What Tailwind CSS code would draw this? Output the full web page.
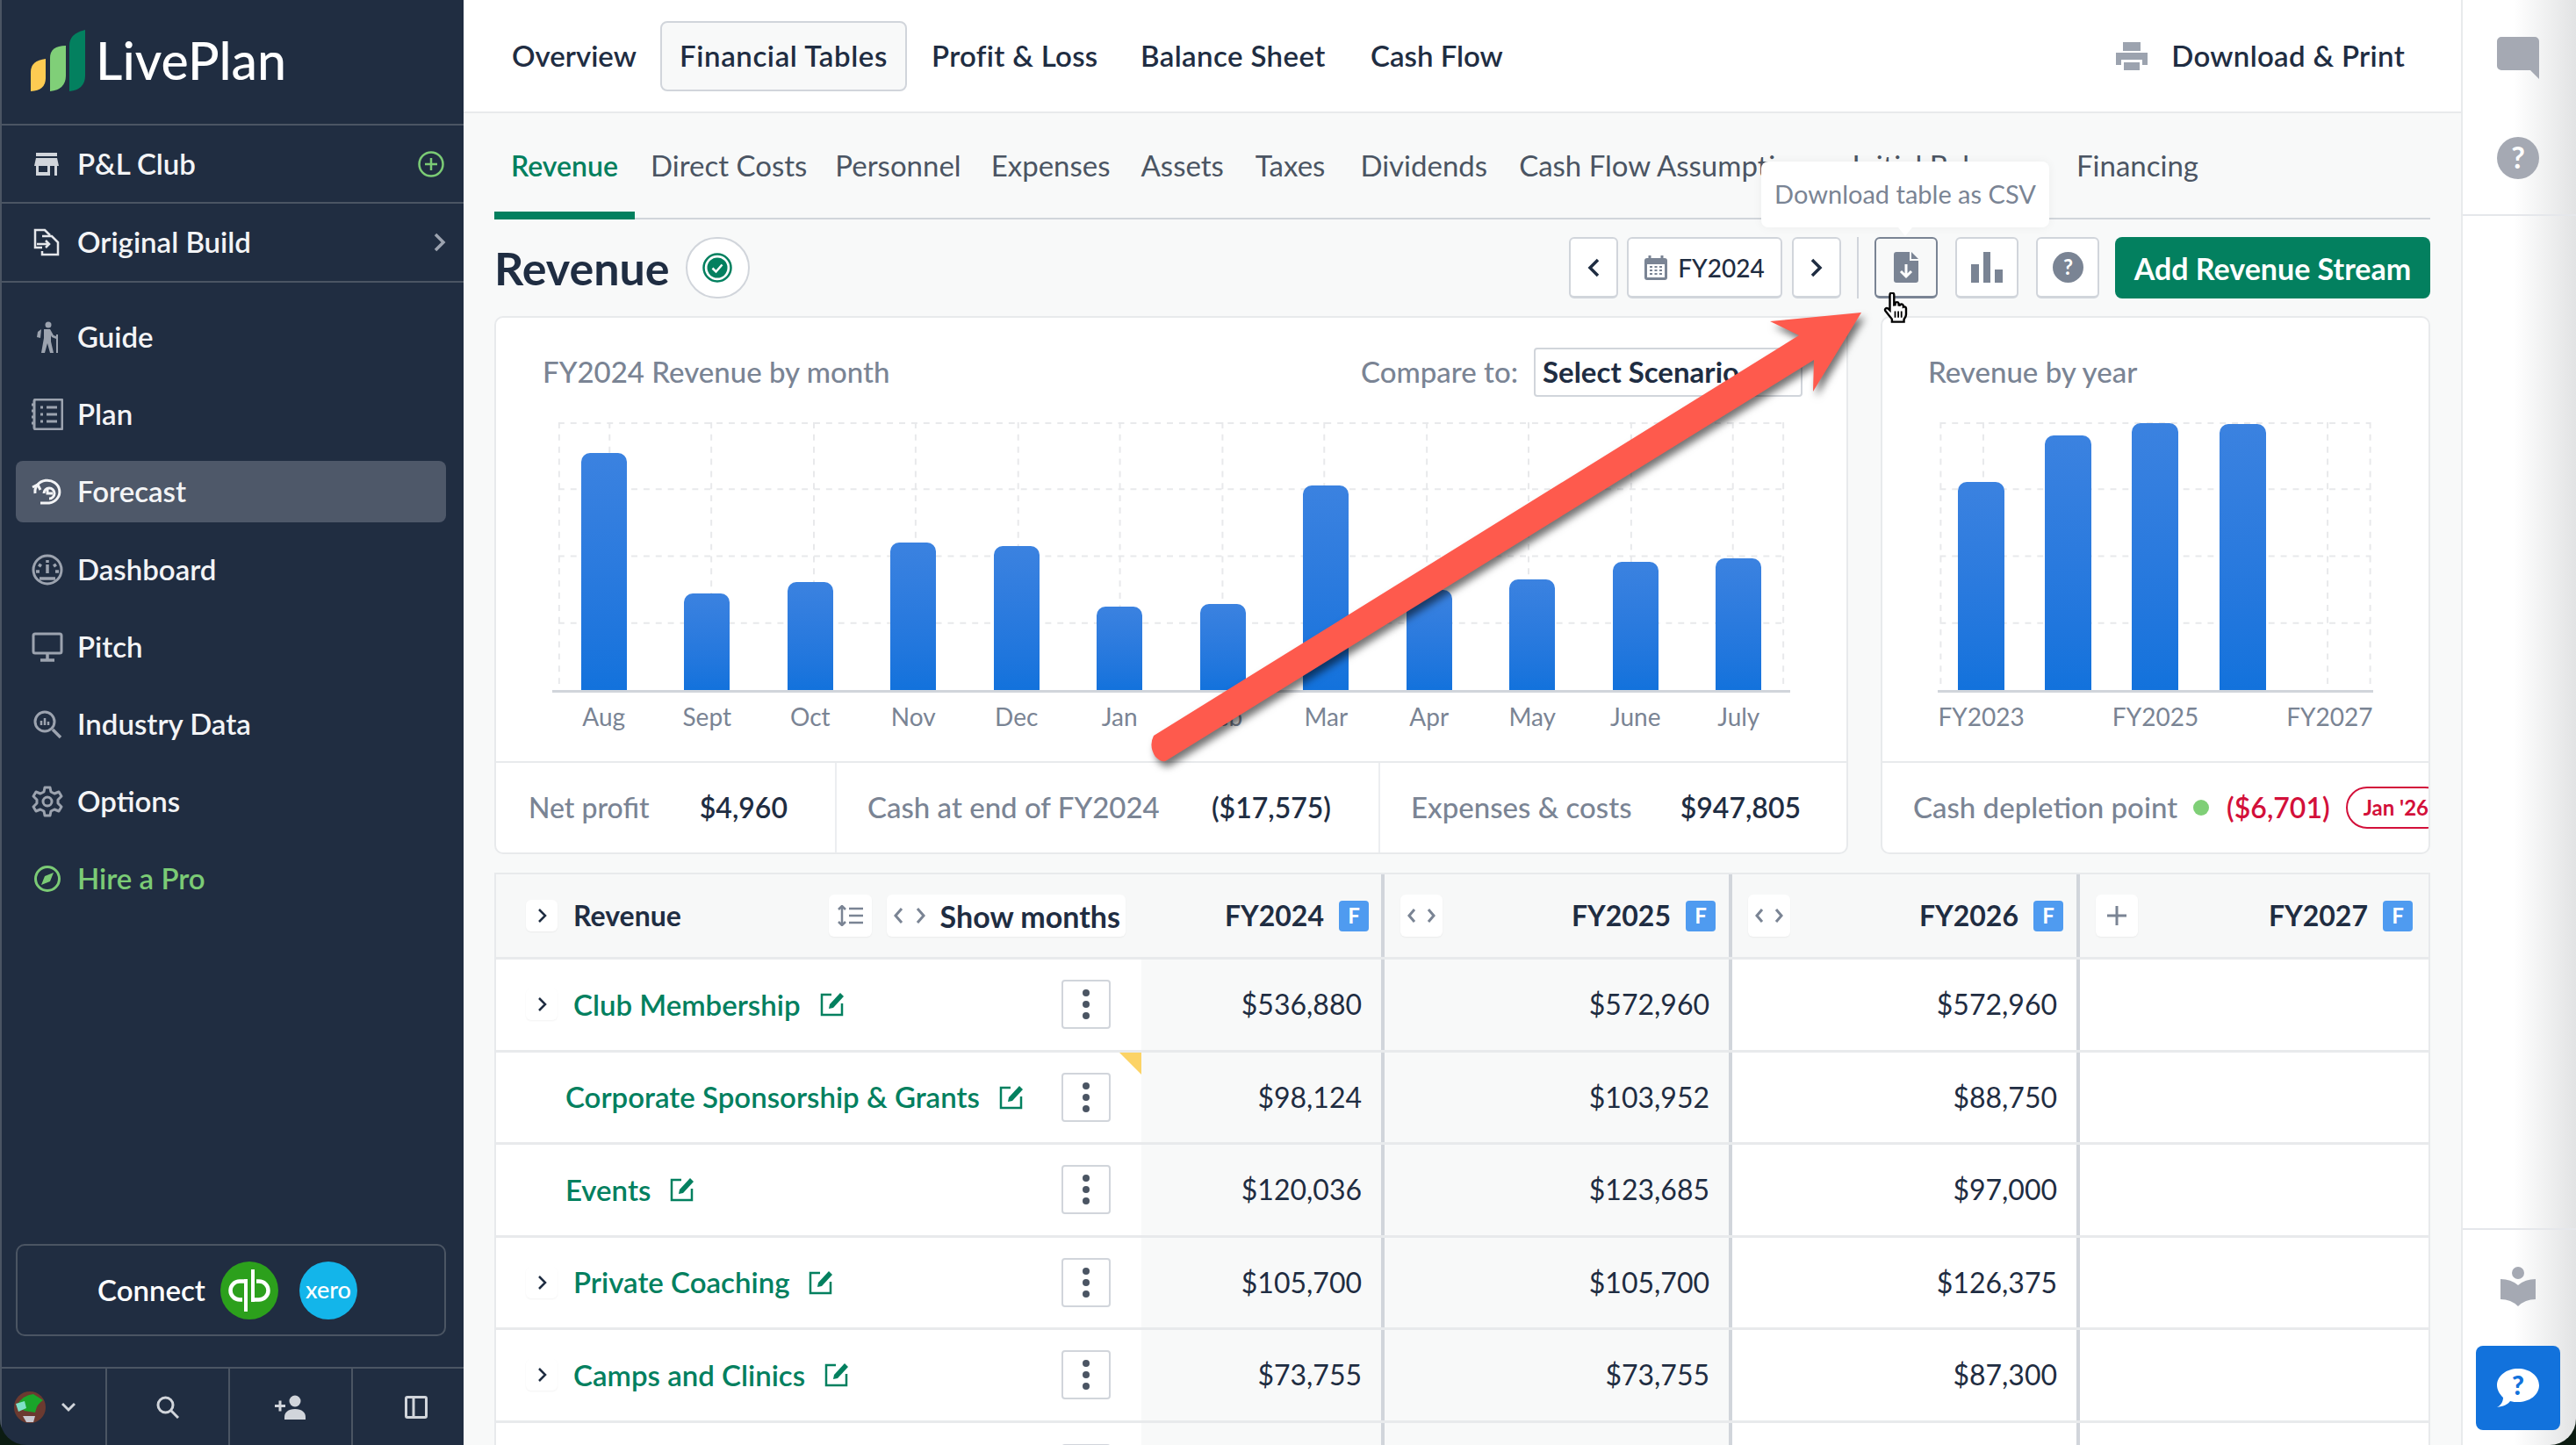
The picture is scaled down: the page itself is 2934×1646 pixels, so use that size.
<!DOCTYPE html>
<html lang="en">
<head>
<meta charset="UTF-8">
<title>LivePlan - Forecast</title>
<script src="https://cdn.jsdelivr.net/npm/@tailwindcss/browser@4"></script>
</head>
<body class="bg-[#0c1c12]">
<div class="relative flex h-[1646px] w-[2934px] overflow-hidden rounded-b-[30px] font-['Lato',sans-serif] text-[32px] text-[#1f2d42]">

  <!-- Sidebar -->
  <aside class="flex w-[528px] shrink-0 flex-col border-l-2 border-[#4b5563] bg-[#202d41] text-[33px] text-[#f3f4f6]">
    <div class="flex h-[143px] items-center gap-[12px] border-b-2 border-[#4b5563] pb-[4px] pl-[33px]">
      <svg class="h-[70px] w-[62px]" viewBox="0 0 62 70"><path d="M0 70V48Q0 35 17 33V55Q17 69 0 70Z" fill="#fdcb52"/><path d="M22 70V32Q22 18 40 18V52Q40 68 22 70Z" fill="#80cf78"/><path d="M44 70V18Q44 4 62 0V52Q62 68 44 70Z" fill="#03805f"/></svg>
      <span class="text-[59px] leading-none font-medium text-white">LivePlan</span>
    </div>
    <div class="flex h-[89px] items-center border-b-2 border-[#4b5563] pr-[22px] pl-[37px]">
      <svg class="mr-[21px] h-[26px] w-[28px]" viewBox="0 0 28 26" fill="#d1d5db"><rect x="2" y="0" width="24" height="4"/><path d="M2 6H26L28 15H0Z"/><path d="M2 15h3v11H2zM23 15h3v11h-3zM5 22h13v4H5zM15 15h3v8h-3z"/></svg>
      <span class="font-semibold">P&amp;L Club</span>
      <svg class="ml-auto h-[30px] w-[30px]" viewBox="0 0 30 30" fill="none" stroke="#7bcb75" stroke-width="2.5"><circle cx="15" cy="15" r="13.5"/><path d="M15 8v14M8 15h14"/></svg>
    </div>
    <div class="flex h-[90px] items-center border-b-2 border-[#4b5563] pr-[20px] pl-[36px]">
      <svg class="mr-[20px] h-[32px] w-[30px]" viewBox="0 0 30 32" fill="none" stroke="#e5e7eb" stroke-width="2.5"><path d="M10 22H2V2h11l6 6"/><path d="M10 9h11l7 7v14H10v-4"/><path d="M4 18h14m-4-4 4 4-4 4"/></svg>
      <span class="font-semibold">Original Build</span>
      <svg class="ml-auto h-[22px] w-[14px]" viewBox="0 0 14 22" fill="none" stroke="#9ca3af" stroke-width="3.5"><path d="M2 2l9 9-9 9"/></svg>
    </div>

    <nav class="flex flex-col pt-[18px] font-semibold">
      <a class="mr-[20px] ml-[16px] flex h-[88px] items-center gap-[16px] px-[18px]">
        <svg class="h-[36px] w-[36px]" viewBox="0 0 36 36" fill="#9ca3af"><circle cx="19" cy="4" r="3.5"/><path d="M12 9h9l4 7 3 1v-2h2v21h-2V20l-5-2-1-2v7l3 13h-4l-3-11-3 11h-4l3-17V9z"/><path d="M7 12l4-3-1 10-4-1z"/></svg>
        <span>Guide</span>
      </a>
      <a class="mr-[20px] ml-[16px] flex h-[88px] items-center gap-[16px] px-[18px]">
        <svg class="h-[36px] w-[36px]" viewBox="0 0 36 36" fill="none"><rect x="3" y="1" width="32" height="34" rx="2" stroke="#9ca3af" stroke-width="3"/><path d="M0 7h4M0 14h4M0 21h4M0 28h4" stroke="#9ca3af" stroke-width="3"/><path d="M10 10h3M17 10h12M10 18h3M17 18h12M10 26h3M17 26h12" stroke="#9ca3af" stroke-width="3"/></svg>
        <span>Plan</span>
      </a>
      <a class="mt-[9px] mr-[20px] mb-[10px] ml-[16px] flex h-[70px] items-center gap-[16px] rounded-[8px] bg-[#4e5869] px-[18px]">
        <svg class="h-[36px] w-[36px]" viewBox="0 0 36 36" fill="none" stroke="#f3f4f6" stroke-width="3"><path d="M4 20A14 13 0 1 1 20 31H10"/><path d="M1 13l6-3 3 6"/><path d="M14 20a6 6 0 1 1 6 6"/><path d="M18 14v6h6"/></svg>
        <span>Forecast</span>
      </a>
      <a class="mr-[20px] ml-[16px] flex h-[88px] items-center gap-[16px] px-[18px]">
        <svg class="h-[36px] w-[36px]" viewBox="0 0 36 36" fill="none" stroke="#9ca3af" stroke-width="3"><circle cx="18" cy="18" r="16"/><path d="M18 7v3M8 12l3 2M28 12l-3 2M5 20h4M27 20h4M18 12v10M9 28h18" stroke-width="3.5"/></svg>
        <span>Dashboard</span>
      </a>
      <a class="mr-[20px] ml-[16px] flex h-[88px] items-center gap-[16px] px-[18px]">
        <svg class="h-[36px] w-[36px]" viewBox="0 0 36 36" fill="none" stroke="#9ca3af" stroke-width="3"><rect x="2" y="3" width="32" height="22" rx="2"/><path d="M18 25v7M10 33h16" stroke-width="3.5"/></svg>
        <span>Pitch</span>
      </a>
      <a class="mr-[20px] ml-[16px] flex h-[88px] items-center gap-[16px] px-[18px]">
        <svg class="h-[36px] w-[36px]" viewBox="0 0 36 36" fill="none" stroke="#9ca3af" stroke-width="3"><circle cx="15" cy="15" r="11"/><path d="M24 24l9 9" stroke-width="3.5"/><path d="M11 14v5M15 11v8M19 15v4" stroke-width="2.5"/></svg>
        <span>Industry Data</span>
      </a>
      <a class="mr-[20px] ml-[16px] flex h-[88px] items-center gap-[16px] px-[18px]">
        <svg class="h-[36px] w-[36px]" viewBox="0 0 36 36" fill="none" stroke="#9ca3af" stroke-width="3"><circle cx="18" cy="18" r="5"/><path d="M15 2h6l1 5 4 2 5-2 3 5-4 4v4l4 4-3 5-5-2-4 2-1 5h-6l-1-5-4-2-5 2-3-5 4-4v-4l-4-4 3-5 5 2 4-2z" stroke-linejoin="round"/></svg>
        <span>Options</span>
      </a>
      <a class="mr-[20px] ml-[16px] flex h-[88px] items-center gap-[16px] px-[18px] text-[#7bcb75]">
        <svg class="h-[36px] w-[36px]" viewBox="0 0 36 36"><circle cx="18" cy="18" r="13.5" fill="none" stroke="#7bcb75" stroke-width="3"/><path d="M25 11l-4 10-10 4 4-10z" fill="#7bcb75"/></svg>
        <span>Hire a Pro</span>
      </a>
    </nav>

    <div class="mt-auto mr-[20px] ml-[16px] flex h-[105px] items-center justify-center gap-[17px] rounded-[10px] border-2 border-[#4b5563] pr-[8px] font-semibold">
      <span class="text-white">Connect</span>
      <svg class="h-[66px] w-[66px]" viewBox="0 0 66 66"><circle cx="33" cy="33" r="33" fill="#2ca01c"/><path d="M29 22.500H22a10.500 10.500 0 0 0 0 21H25" fill="none" stroke="white" stroke-width="4.500"/><path d="M29 20V57" stroke="white" stroke-width="4"/><path d="M37 43.500H44a10.500 10.500 0 0 0 0-21H41" fill="none" stroke="white" stroke-width="4.500"/><path d="M37 9V46" stroke="white" stroke-width="4"/></svg>
      <span class="ml-[7px] flex h-[66px] w-[66px] items-center justify-center rounded-full bg-[#13b5ea] pb-[3px] text-[27px] leading-none font-medium text-white">xero</span>
    </div>
    <div class="mt-[35px] flex h-[89px] border-t-2 border-[#4b5563]">
      <div class="flex w-[120px] items-center gap-[18px] border-r-2 border-[#4b5563] pl-[14px]">
        <svg class="h-[36px] w-[36px]" viewBox="0 0 36 36"><circle cx="18" cy="18" r="18" fill="#6b3a30"/><path d="M3 16 Q10 4 22 3 L33 10 Q26 14 24 24 L12 22Z" fill="#1aa52a"/><path d="M2 14l10-3 2 8-9 4z" fill="#7fe0c8"/><path d="M10 28h14l-2 7H14z" fill="#c8c8d0"/></svg>
        <svg class="h-[12px] w-[16px]" viewBox="0 0 16 12" fill="none" stroke="#d1d5db" stroke-width="3"><path d="M1 2l7 7 7-7"/></svg>
      </div>
      <div class="flex w-[140px] items-center justify-center border-r-2 border-[#4b5563]">
        <svg class="h-[26px] w-[26px]" viewBox="0 0 26 26" fill="none" stroke="#d1d5db" stroke-width="3"><circle cx="10.5" cy="10.5" r="8.5"/><path d="M17 17l8 8"/></svg>
      </div>
      <div class="flex w-[140px] items-center justify-center border-r-2 border-[#4b5563]">
        <svg class="h-[28px] w-[36px]" viewBox="0 0 36 28" fill="#d1d5db"><circle cx="23" cy="7" r="6.5"/><path d="M11 28v-3c0-5 4-9 12-9s12 4 12 9v3z"/><path d="M0 11h12v3H0zM4.500 6.500h3v12h-3z"/></svg>
      </div>
      <div class="flex flex-1 items-center justify-center pl-[18px]">
        <svg class="h-[26px] w-[26px]" viewBox="0 0 26 26" fill="none" stroke="#d1d5db" stroke-width="3"><rect x="1.500" y="1.500" width="23" height="23" rx="1.500"/><path d="M10 2v22"/></svg>
      </div>
    </div>
  </aside>

  <!-- Main -->
  <main class="flex w-[2275px] shrink-0 flex-col overflow-hidden bg-[#f8f9f9]">
    <header class="flex h-[129px] shrink-0 items-center border-b-2 border-[#e8eaec] bg-white pr-[64px] pl-[35px] text-[33px] font-semibold whitespace-nowrap">
      <a class="w-[180px] px-[20px]">Overview</a>
      <a class="ml-[9px] flex h-[80px] w-[281px] items-center justify-center rounded-[8px] border-2 border-[#d1d5db] bg-[#f8f9f9] tracking-[0.6px]">Financial Tables</a>
      <a class="ml-[28px] w-[189px] tracking-[0.3px]">Profit &amp; Loss</a>
      <a class="ml-[49px] w-[213px] tracking-[0.4px]">Balance Sheet</a>
      <a class="ml-[49px]">Cash Flow</a>
      <div class="ml-auto flex items-center gap-[27px]">
        <svg class="h-[32px] w-[36px]" viewBox="0 0 36 32" fill="#9ca3af"><path d="M8 0h20v10H8z"/><path d="M0 12h36v14h-6v-6H6v6H0z"/><path d="M9 23h18v9H9z"/></svg>
        <span class="tracking-[0.3px]">Download &amp; Print</span>
      </div>
    </header>

    <div class="flex flex-col pr-[35px] pl-[35px]">
      <!-- Sub tabs -->
      <div class="flex h-[121px] items-end border-b-[2px] border-[#d1d5db] text-[33px] whitespace-nowrap text-[#4b5563]">
        <a class="-mb-[2px] flex h-[121px] items-center border-b-[9px] border-[#03805f] px-[19px] pt-[8px] text-[32px] font-semibold text-[#03805f]">Revenue</a>
        <a class="flex h-[119px] items-center pr-[15px] pl-[18px]">Direct Costs</a>
        <a class="flex h-[119px] items-center px-[17px]">Personnel</a>
        <a class="flex h-[119px] items-center px-[17px]">Expenses</a>
        <a class="flex h-[119px] items-center px-[18px]">Assets</a>
        <a class="flex h-[119px] items-center pr-[22px] pl-[18px]">Taxes</a>
        <a class="flex h-[119px] items-center px-[18px]">Dividends</a>
        <a class="flex h-[119px] items-center px-[18px]">Cash Flow Assumptions</a>
        <a class="flex h-[119px] items-center pr-[22px] pl-[18px]">Initial Balances</a>
        <a class="flex h-[119px] items-center px-[18px]">Financing</a>
      </div>

      <!-- Title row -->
      <div class="mt-[20px] flex h-[70px] items-center">
        <h1 class="text-[52px] leading-none font-bold">Revenue</h1>
        <div class="ml-[18px] flex h-[70px] w-[73px] items-center justify-center rounded-full border-2 border-[#d1d5db] bg-white">
          <svg class="h-[34px] w-[34px]" viewBox="0 0 34 34"><circle cx="17" cy="17" r="15.500" fill="none" stroke="#03805f" stroke-width="2.500"/><circle cx="17" cy="17" r="11.500" fill="#03805f"/><path d="M11.500 17.500l4 4 7-8" fill="none" stroke="white" stroke-width="2.500"/></svg>
        </div>
        <div class="ml-auto flex items-center">
          <button class="flex h-[70px] w-[56px] items-center justify-center rounded-[6px] border-2 border-b-[3px] border-[#d1d5db] bg-white">
            <svg class="h-[22px] w-[14px]" viewBox="0 0 14 22" fill="none" stroke="#1f2d42" stroke-width="3.500"><path d="M12 2l-9 9 9 9"/></svg>
          </button>
          <button class="ml-[10px] flex h-[70px] w-[177px] items-center justify-center gap-[12px] rounded-[6px] border-2 border-b-[3px] border-[#d1d5db] bg-white text-[28px] font-medium">
            <svg class="h-[28px] w-[26px]" viewBox="0 0 26 28"><path d="M6 0v4M20 0v4" stroke="#7a8494" stroke-width="3"/><rect x="0" y="3" width="26" height="25" rx="3" fill="#7a8494"/><rect x="3" y="10" width="20" height="15" fill="white"/><path d="M6 13h3M11.500 13h3M17 13h3M6 17h3M11.500 17h3M17 17h3M6 21h3M11.500 21h3M17 21h3" stroke="#7a8494" stroke-width="2"/></svg>
            <span>FY2024</span>
          </button>
          <button class="ml-[11px] flex h-[70px] w-[56px] items-center justify-center rounded-[6px] border-2 border-b-[3px] border-[#d1d5db] bg-white">
            <svg class="h-[22px] w-[14px]" viewBox="0 0 14 22" fill="none" stroke="#1f2d42" stroke-width="3.500"><path d="M2 2l9 9-9 9"/></svg>
          </button>
          <div class="mx-[18px] h-[70px] w-[2px] bg-[#d1d5db]"></div>
          <button class="flex h-[70px] w-[72px] items-center justify-center rounded-[6px] border-2 border-b-[3px] border-[#7a8494] bg-[#f8f9f9]">
            <svg class="h-[35px] w-[28px]" viewBox="0 0 28 35"><path d="M3 0H18V10H28V32a3 3 0 0 1-3 3H3a3 3 0 0 1-3-3V3a3 3 0 0 1 3-3Z" fill="#7a8494"/><path d="M20 0l8 8h-8z" fill="#7a8494"/><path d="M14 14v13m-6-5 6 6 6-6" fill="none" stroke="white" stroke-width="3"/></svg>
          </button>
          <button class="ml-[20px] flex h-[70px] w-[72px] items-center justify-center rounded-[6px] border-2 border-b-[3px] border-[#d1d5db] bg-white">
            <svg class="h-[35px] w-[36px]" viewBox="0 0 36 35" fill="#7a8494"><rect x="0" y="14" width="9" height="21"/><rect x="14" y="0" width="8" height="35"/><rect x="27" y="20" width="9" height="15"/></svg>
          </button>
          <button class="ml-[20px] flex h-[70px] w-[72px] items-center justify-center rounded-[6px] border-2 border-b-[3px] border-[#d1d5db] bg-white">
            <svg class="h-[35px] w-[35px]" viewBox="0 0 35 35"><circle cx="17.500" cy="17.500" r="17.500" fill="#7a8494"/><text x="17.500" y="26" text-anchor="middle" fill="white" font-size="24" font-weight="700" font-family="Lato">?</text></svg>
          </button>
          <button class="ml-[18px] flex h-[70px] w-[359px] items-center justify-center rounded-[8px] bg-[#03805f] text-[34px] font-bold text-white">Add Revenue Stream</button>
        </div>
      </div>

      <!-- Chart cards -->
      <div class="mt-[20px] flex h-[613px] gap-[37px] text-[33px]">
        <section class="flex w-[1542px] flex-col overflow-hidden rounded-[10px] border-2 border-[#e8eaec] bg-white">
          <div class="h-[505px] px-[64px] pt-[34px]">
            <div class="-ml-[11px] flex h-[56px] items-center whitespace-nowrap text-[#7a8494]">
              <span class="font-medium">FY2024 Revenue by month</span>
              <span class="ml-auto font-medium">Compare to:</span>
              <div class="mr-[-14px] ml-[18px] flex h-[56px] w-[306px] items-center rounded-[4px] border-2 border-[#d1d5db] px-[8px] font-bold text-[#1f2d42]">Select Scenario</div>
            </div>
            <div class="relative mt-[29px] grid h-[308px] w-[1410px] grid-cols-12 items-end border-b-[3px] border-[#d1d5db]">
              <svg class="absolute inset-0 h-full w-full" viewBox="0 0 1410 308" fill="none" stroke="#e8e9eb" stroke-width="2" stroke-dasharray="7 7"><path d="M0 1H1410M0 77H1410M0 154H1410M0 231H1410M1 0V308M59 0V308M176 0V308M294 0V308M411 0V308M529 0V308M646 0V308M764 0V308M881 0V308M999 0V308M1116 0V308M1234 0V308M1351 0V308M1409 0V308"/></svg>
              <div class="relative mx-auto h-[270px] w-[52px] rounded-t-[10px] bg-linear-to-b from-[#3b82e0] to-[#1272dc]"></div>
              <div class="relative mx-auto h-[110px] w-[52px] rounded-t-[10px] bg-linear-to-b from-[#3b82e0] to-[#1272dc]"></div>
              <div class="relative mx-auto h-[123px] w-[52px] rounded-t-[10px] bg-linear-to-b from-[#3b82e0] to-[#1272dc]"></div>
              <div class="relative mx-auto h-[168px] w-[52px] rounded-t-[10px] bg-linear-to-b from-[#3b82e0] to-[#1272dc]"></div>
              <div class="relative mx-auto h-[164px] w-[52px] rounded-t-[10px] bg-linear-to-b from-[#3b82e0] to-[#1272dc]"></div>
              <div class="relative mx-auto h-[95px] w-[52px] rounded-t-[10px] bg-linear-to-b from-[#3b82e0] to-[#1272dc]"></div>
              <div class="relative mx-auto h-[98px] w-[52px] rounded-t-[10px] bg-linear-to-b from-[#3b82e0] to-[#1272dc]"></div>
              <div class="relative mx-auto h-[233px] w-[52px] rounded-t-[10px] bg-linear-to-b from-[#3b82e0] to-[#1272dc]"></div>
              <div class="relative mx-auto h-[114px] w-[52px] rounded-t-[10px] bg-linear-to-b from-[#3b82e0] to-[#1272dc]"></div>
              <div class="relative mx-auto h-[126px] w-[52px] rounded-t-[10px] bg-linear-to-b from-[#3b82e0] to-[#1272dc]"></div>
              <div class="relative mx-auto h-[146px] w-[52px] rounded-t-[10px] bg-linear-to-b from-[#3b82e0] to-[#1272dc]"></div>
              <div class="relative mx-auto h-[150px] w-[52px] rounded-t-[10px] bg-linear-to-b from-[#3b82e0] to-[#1272dc]"></div>
            </div>
            <div class="mt-[6px] grid w-[1410px] grid-cols-12 text-center text-[28px] text-[#7a8494]">
              <span>Aug</span><span>Sept</span><span>Oct</span><span>Nov</span><span>Dec</span><span>Jan</span><span>Feb</span><span>Mar</span><span>Apr</span><span>May</span><span>June</span><span>July</span>
            </div>
          </div>
          <div class="flex flex-1 items-center border-t-2 border-[#e8eaec] whitespace-nowrap">
            <div class="flex h-full w-[388px] items-center justify-between border-r-2 border-[#eceef0] pr-[54px] pl-[37px]"><span class="text-[32px] font-medium text-[#7a8494]">Net profit</span><span class="text-[32px] font-semibold">$4,960</span></div>
            <div class="flex h-full w-[619px] items-center justify-between border-r-2 border-[#eceef0] pr-[54px] pl-[35px]"><span class="font-medium text-[#7a8494]">Cash at end of FY2024</span><span class="text-[32px] font-semibold">($17,575)</span></div>
            <div class="flex h-full flex-1 items-center justify-between pr-[52px] pl-[35px]"><span class="font-medium text-[#7a8494]">Expenses &amp; costs</span><span class="text-[32px] font-semibold">$947,805</span></div>
          </div>
        </section>
        <section class="flex flex-1 flex-col overflow-hidden rounded-[10px] border-2 border-[#e8eaec] bg-white">
          <div class="h-[505px] pt-[34px] pl-[63px]">
            <div class="-ml-[11px] flex h-[56px] items-center font-medium text-[#7a8494]">Revenue by year</div>
            <div class="relative mt-[29px] grid h-[308px] w-[496px] grid-cols-5 items-end border-b-[3px] border-[#d1d5db]">
              <svg class="absolute inset-0 h-full w-full" viewBox="0 0 496 308" fill="none" stroke="#e8e9eb" stroke-width="2" stroke-dasharray="7 7"><path d="M0 1H496M0 77H496M0 154H496M0 231H496M1 0V308M50 0V308M446 0V308M495 0V308"/></svg>
              <div class="relative mx-auto h-[237px] w-[53px] rounded-t-[10px] bg-linear-to-b from-[#3b82e0] to-[#1272dc]"></div>
              <div class="relative mx-auto h-[290px] w-[53px] rounded-t-[10px] bg-linear-to-b from-[#3b82e0] to-[#1272dc]"></div>
              <div class="relative mx-auto h-[304px] w-[53px] rounded-t-[10px] bg-linear-to-b from-[#3b82e0] to-[#1272dc]"></div>
              <div class="relative mx-auto h-[303px] w-[53px] rounded-t-[10px] bg-linear-to-b from-[#3b82e0] to-[#1272dc]"></div>
            </div>
            <div class="mt-[6px] grid w-[496px] grid-cols-5 text-center text-[28px] whitespace-nowrap text-[#7a8494]">
              <span>FY2023</span><span></span><span>FY2025</span><span></span><span>FY2027</span>
            </div>
          </div>
          <div class="flex flex-1 items-center overflow-hidden border-t-2 border-[#e8eaec] pl-[35px] whitespace-nowrap">
            <span class="font-medium text-[#7a8494]">Cash depletion point</span>
            <span class="ml-[18px] h-[18px] w-[18px] shrink-0 rounded-full bg-[#7fcf77]"></span>
            <span class="ml-[20px] text-[32px] font-semibold text-[#d3103a]">($6,701)</span>
            <span class="ml-[18px] flex h-[48px] shrink-0 items-center rounded-full border-2 border-[#d3103a] px-[18px] text-[24px] font-bold text-[#d3103a]">Jan '26</span>
          </div>
        </section>
      </div>

      <!-- Table -->
      <div class="mt-[21px] border-x-2 border-t-2 border-[#e8eaec]">
        <div class="grid h-[97px] grid-cols-[735px_273px_396px_396px_1fr] border-b-[3px] border-[#e8eaec] bg-[#f7f8f8] font-bold whitespace-nowrap">
          <div class="flex items-center pr-[18px] pl-[34px]">
            <button class="flex h-[36px] w-[36px] items-center justify-center rounded-[6px] bg-white shadow-xs"><svg class="h-[18px] w-[11px]" viewBox="0 0 11 18" fill="none" stroke="#1f2d42" stroke-width="2.500"><path d="M2 2l7 7-7 7"/></svg></button>
            <span class="ml-[18px]">Revenue</span>
            <button class="ml-auto flex h-[48px] w-[49px] items-center justify-center rounded-[6px] bg-white shadow-xs"><svg class="h-[24px] w-[30px]" viewBox="0 0 30 24" fill="none" stroke="#7a8494" stroke-width="2.500"><path d="M5 1v22M1 5l4-4 4 4M1 19l4 4 4-4"/><path d="M13 4h16M13 12h16M13 20h16"/></svg></button>
            <button class="ml-[17px] flex h-[48px] w-[272px] items-center justify-end gap-[17px] rounded-[6px] bg-white pr-[6px] shadow-xs"><svg class="h-[20px] w-[36px]" viewBox="0 0 36 20" fill="none" stroke="#7a8494" stroke-width="3"><path d="M9 2l-7 8 7 8M27 2l7 8-7 8"/></svg><span class="text-[34px]">Show months</span></button>
          </div>
          <div class="flex items-center justify-end gap-[17px] pr-[14px]"><span>FY2024</span><span class="flex h-[35px] w-[34px] items-center justify-center rounded-[4px] bg-[#4f9bf0] text-[24px] text-white">F</span></div>
          <div class="flex items-center gap-[17px] border-l-4 border-[#d1d5db] pr-[15px] pl-[18px]"><button class="flex h-[48px] w-[48px] items-center justify-center rounded-[6px] bg-white shadow-xs"><svg class="h-[18px] w-[32px]" viewBox="0 0 32 18" fill="none" stroke="#7a8494" stroke-width="3"><path d="M8 2l-6 7 6 7M24 2l6 7-6 7"/></svg></button><span class="ml-auto">FY2025</span><span class="flex h-[35px] w-[34px] items-center justify-center rounded-[4px] bg-[#4f9bf0] text-[24px] text-white">F</span></div>
          <div class="flex items-center gap-[17px] border-l-4 border-[#d1d5db] pr-[15px] pl-[18px]"><button class="flex h-[48px] w-[48px] items-center justify-center rounded-[6px] bg-white shadow-xs"><svg class="h-[18px] w-[32px]" viewBox="0 0 32 18" fill="none" stroke="#7a8494" stroke-width="3"><path d="M8 2l-6 7 6 7M24 2l6 7-6 7"/></svg></button><span class="ml-auto">FY2026</span><span class="flex h-[35px] w-[34px] items-center justify-center rounded-[4px] bg-[#4f9bf0] text-[24px] text-white">F</span></div>
          <div class="flex items-center gap-[17px] border-l-4 border-[#d1d5db] pr-[18px] pl-[18px]"><button class="flex h-[48px] w-[48px] items-center justify-center rounded-[6px] bg-white shadow-xs"><svg class="h-[24px] w-[24px]" viewBox="0 0 24 24" fill="none" stroke="#7a8494" stroke-width="3"><path d="M12 1v22M1 12h22"/></svg></button><span class="ml-auto">FY2027</span><span class="flex h-[35px] w-[34px] items-center justify-center rounded-[4px] bg-[#4f9bf0] text-[24px] text-white">F</span></div>
        </div>

        <div class="grid h-[105.500px] grid-cols-[735px_273px_396px_396px_1fr] border-b-[3px] border-[#e8eaec]">
          <div class="flex items-center bg-white pr-[35px] pl-[34px] text-[33px] font-semibold text-[#03805f]">
            <button class="flex h-[36px] w-[36px] items-center justify-center rounded-[6px] bg-white shadow-xs"><svg class="h-[18px] w-[11px]" viewBox="0 0 11 18" fill="none" stroke="#1f2d42" stroke-width="2.500"><path d="M2 2l7 7-7 7"/></svg></button>
            <span class="ml-[18px]">Club Membership</span>
            <svg class="ml-[22px] h-[28px] w-[28px]" viewBox="0 0 28 28" fill="none" stroke="#03805f" stroke-width="2.500"><path d="M13 3H2v23h23V13"/><path d="M10 19l1-5L23 1l4 4-12 13z" fill="#03805f" stroke="none"/></svg>
            <button class="ml-auto flex h-[56px] w-[56px] items-center justify-center rounded-[4px] border-2 border-[#d1d5db] bg-white"><svg class="h-[34px] w-[8px]" viewBox="0 0 8 34" fill="#4b5563"><circle cx="4" cy="4" r="4"/><circle cx="4" cy="17" r="4"/><circle cx="4" cy="30" r="4"/></svg></button>
          </div>
          <div class="flex items-center justify-end pr-[22px]">$536,880</div>
          <div class="flex items-center justify-end border-l-4 border-[#d1d5db] pr-[22px]">$572,960</div>
          <div class="flex items-center justify-end border-l-4 border-[#d1d5db] bg-white pr-[22px]">$572,960</div>
          <div class="border-l-4 border-[#d1d5db] bg-white"></div>
        </div>

        <div class="grid h-[105.500px] grid-cols-[735px_273px_396px_396px_1fr] border-b-[3px] border-[#e8eaec]">
          <div class="relative flex items-center bg-white pr-[35px] pl-[79px] text-[33px] font-semibold text-[#03805f]">
            <span>Corporate Sponsorship &amp; Grants</span>
            <svg class="ml-[22px] h-[28px] w-[28px]" viewBox="0 0 28 28" fill="none" stroke="#03805f" stroke-width="2.500"><path d="M13 3H2v23h23V13"/><path d="M10 19l1-5L23 1l4 4-12 13z" fill="#03805f" stroke="none"/></svg>
            <button class="ml-auto flex h-[56px] w-[56px] items-center justify-center rounded-[4px] border-2 border-[#d1d5db] bg-white"><svg class="h-[34px] w-[8px]" viewBox="0 0 8 34" fill="#4b5563"><circle cx="4" cy="4" r="4"/><circle cx="4" cy="17" r="4"/><circle cx="4" cy="30" r="4"/></svg></button>
            <svg class="absolute top-0 right-0 h-[25px] w-[25px]" viewBox="0 0 25 25" fill="#fcd366"><path d="M0 0H25V25Z"/></svg>
          </div>
          <div class="flex items-center justify-end pr-[22px]">$98,124</div>
          <div class="flex items-center justify-end border-l-4 border-[#d1d5db] pr-[22px]">$103,952</div>
          <div class="flex items-center justify-end border-l-4 border-[#d1d5db] bg-white pr-[22px]">$88,750</div>
          <div class="border-l-4 border-[#d1d5db] bg-white"></div>
        </div>

        <div class="grid h-[105.500px] grid-cols-[735px_273px_396px_396px_1fr] border-b-[3px] border-[#e8eaec]">
          <div class="flex items-center bg-white pr-[35px] pl-[79px] text-[33px] font-semibold text-[#03805f]">
            <span>Events</span>
            <svg class="ml-[22px] h-[28px] w-[28px]" viewBox="0 0 28 28" fill="none" stroke="#03805f" stroke-width="2.500"><path d="M13 3H2v23h23V13"/><path d="M10 19l1-5L23 1l4 4-12 13z" fill="#03805f" stroke="none"/></svg>
            <button class="ml-auto flex h-[56px] w-[56px] items-center justify-center rounded-[4px] border-2 border-[#d1d5db] bg-white"><svg class="h-[34px] w-[8px]" viewBox="0 0 8 34" fill="#4b5563"><circle cx="4" cy="4" r="4"/><circle cx="4" cy="17" r="4"/><circle cx="4" cy="30" r="4"/></svg></button>
          </div>
          <div class="flex items-center justify-end pr-[22px]">$120,036</div>
          <div class="flex items-center justify-end border-l-4 border-[#d1d5db] pr-[22px]">$123,685</div>
          <div class="flex items-center justify-end border-l-4 border-[#d1d5db] bg-white pr-[22px]">$97,000</div>
          <div class="border-l-4 border-[#d1d5db] bg-white"></div>
        </div>

        <div class="grid h-[105.500px] grid-cols-[735px_273px_396px_396px_1fr] border-b-[3px] border-[#e8eaec]">
          <div class="flex items-center bg-white pr-[35px] pl-[34px] text-[33px] font-semibold text-[#03805f]">
            <button class="flex h-[36px] w-[36px] items-center justify-center rounded-[6px] bg-white shadow-xs"><svg class="h-[18px] w-[11px]" viewBox="0 0 11 18" fill="none" stroke="#1f2d42" stroke-width="2.500"><path d="M2 2l7 7-7 7"/></svg></button>
            <span class="ml-[18px]">Private Coaching</span>
            <svg class="ml-[22px] h-[28px] w-[28px]" viewBox="0 0 28 28" fill="none" stroke="#03805f" stroke-width="2.500"><path d="M13 3H2v23h23V13"/><path d="M10 19l1-5L23 1l4 4-12 13z" fill="#03805f" stroke="none"/></svg>
            <button class="ml-auto flex h-[56px] w-[56px] items-center justify-center rounded-[4px] border-2 border-[#d1d5db] bg-white"><svg class="h-[34px] w-[8px]" viewBox="0 0 8 34" fill="#4b5563"><circle cx="4" cy="4" r="4"/><circle cx="4" cy="17" r="4"/><circle cx="4" cy="30" r="4"/></svg></button>
          </div>
          <div class="flex items-center justify-end pr-[22px]">$105,700</div>
          <div class="flex items-center justify-end border-l-4 border-[#d1d5db] pr-[22px]">$105,700</div>
          <div class="flex items-center justify-end border-l-4 border-[#d1d5db] bg-white pr-[22px]">$126,375</div>
          <div class="border-l-4 border-[#d1d5db] bg-white"></div>
        </div>

        <div class="grid h-[105.500px] grid-cols-[735px_273px_396px_396px_1fr] border-b-[3px] border-[#e8eaec]">
          <div class="flex items-center bg-white pr-[35px] pl-[34px] text-[33px] font-semibold text-[#03805f]">
            <button class="flex h-[36px] w-[36px] items-center justify-center rounded-[6px] bg-white shadow-xs"><svg class="h-[18px] w-[11px]" viewBox="0 0 11 18" fill="none" stroke="#1f2d42" stroke-width="2.500"><path d="M2 2l7 7-7 7"/></svg></button>
            <span class="ml-[18px]">Camps and Clinics</span>
            <svg class="ml-[22px] h-[28px] w-[28px]" viewBox="0 0 28 28" fill="none" stroke="#03805f" stroke-width="2.500"><path d="M13 3H2v23h23V13"/><path d="M10 19l1-5L23 1l4 4-12 13z" fill="#03805f" stroke="none"/></svg>
            <button class="ml-auto flex h-[56px] w-[56px] items-center justify-center rounded-[4px] border-2 border-[#d1d5db] bg-white"><svg class="h-[34px] w-[8px]" viewBox="0 0 8 34" fill="#4b5563"><circle cx="4" cy="4" r="4"/><circle cx="4" cy="17" r="4"/><circle cx="4" cy="30" r="4"/></svg></button>
          </div>
          <div class="flex items-center justify-end pr-[22px]">$73,755</div>
          <div class="flex items-center justify-end border-l-4 border-[#d1d5db] pr-[22px]">$73,755</div>
          <div class="flex items-center justify-end border-l-4 border-[#d1d5db] bg-white pr-[22px]">$87,300</div>
          <div class="border-l-4 border-[#d1d5db] bg-white"></div>
        </div>

        <div class="grid h-[60px] grid-cols-[735px_273px_396px_396px_1fr]">
          <div class="flex justify-end bg-white pt-[24px] pr-[35px]"><button class="h-[56px] w-[56px] rounded-[4px] border-2 border-[#d1d5db] bg-white"></button></div>
          <div></div>
          <div class="border-l-4 border-[#d1d5db]"></div>
          <div class="border-l-4 border-[#d1d5db] bg-white"></div>
          <div class="border-l-4 border-[#d1d5db] bg-white"></div>
        </div>
      </div>
    </div>
  </main>

  <!-- Right rail -->
  <aside class="flex flex-1 flex-col border-l-2 border-[#e8eaec] bg-linear-to-r from-white from-45% to-[#e2e3e4]">
    <div class="flex h-[246px] flex-col items-center gap-[66px] border-b-2 border-[#e5e7eb] pt-[42px] pr-[4px]">
      <svg class="h-[48px] w-[48px]" viewBox="0 0 48 48" fill="#a5a9b3"><path d="M5 0H43a5 5 0 0 1 5 5V48L38 38H5a5 5 0 0 1-5-5V5a5 5 0 0 1 5-5Z"/></svg>
      <svg class="h-[48px] w-[48px]" viewBox="0 0 48 48"><circle cx="24" cy="24" r="24" fill="#a5a9b3"/><text x="24" y="36" text-anchor="middle" fill="white" font-size="34" font-weight="700" font-family="Lato">?</text></svg>
    </div>
    <div class="mt-auto flex h-[247px] flex-col items-center border-t-2 border-[#e5e7eb] pt-[42px] pr-[4px]">
      <svg class="h-[45px] w-[40px]" viewBox="0 0 40 45" fill="#a5a9b3"><circle cx="20" cy="7" r="7"/><path d="M0 14Q12 14 20 21Q28 14 40 14V37Q28 37 20 45Q12 37 0 37Z"/></svg>
      <button class="mt-[45px] flex h-[96px] w-[96px] items-center justify-center rounded-[8px] bg-[#1272dc]">
        <svg class="h-[44px] w-[48px]" viewBox="0 0 48 44"><path d="M24 0C37 0 48 8 48 19S37 38 24 38c-3 0-6 0-9-1-3 4-8 6-15 7 4-2 7-6 7-11C3 29 0 24 0 19 0 8 11 0 24 0Z" fill="white"/><text x="24" y="30" text-anchor="middle" fill="#1272dc" font-size="30" font-weight="900" font-family="Lato">?</text></svg>
      </button>
    </div>
  </aside>

  <!-- Tooltip -->
  <div class="absolute top-[184px] left-[2006px] flex h-[75px] w-[328px] items-start justify-center rounded-[8px] bg-white pt-[15px] text-[29px] text-[#7a8494] shadow-[0_0_12px_rgba(0,0,0,0.05)]">Download table as CSV</div>
  <svg class="absolute top-[259px] left-[2162px] h-[10px] w-[16px]" viewBox="0 0 16 10" fill="white"><path d="M0 0H16L8 10Z"/></svg>

  <!-- Annotation arrow -->
  <svg class="absolute top-[340px] left-[1300px] h-[540px] w-[840px] drop-shadow-[4px_6px_4px_rgba(0,0,0,0.55)]" viewBox="0 0 840 540" fill="#fe5a4d"><path d="M820 16 716 26 749 42 14 498Q8 510 16 522 24 530 29 526L766 70 765 106Z"/></svg>

  <!-- Pointer -->
  <svg class="absolute top-[333px] left-[2144px] h-[36px] w-[29px]" viewBox="0 0 24 30"><path d="M7 2.500a2 2 0 0 1 4 0V12l1-.2V10.500a1.800 1.800 0 0 1 3.400 0V12l1 .2a1.800 1.800 0 0 1 3.400.6v1a1.800 1.800 0 0 1 2.600 1.400V21c0 2-1 3-2 4.500V28H9v-2.500L3 18c-1.500-2 .5-4 2.500-2.500L7 17Z" fill="white" stroke="black" stroke-width="2"/><path d="M12 18v6M15 18v6M18 18v6" stroke="black" stroke-width="1.500"/></svg>
</div>
</body>
</html>
